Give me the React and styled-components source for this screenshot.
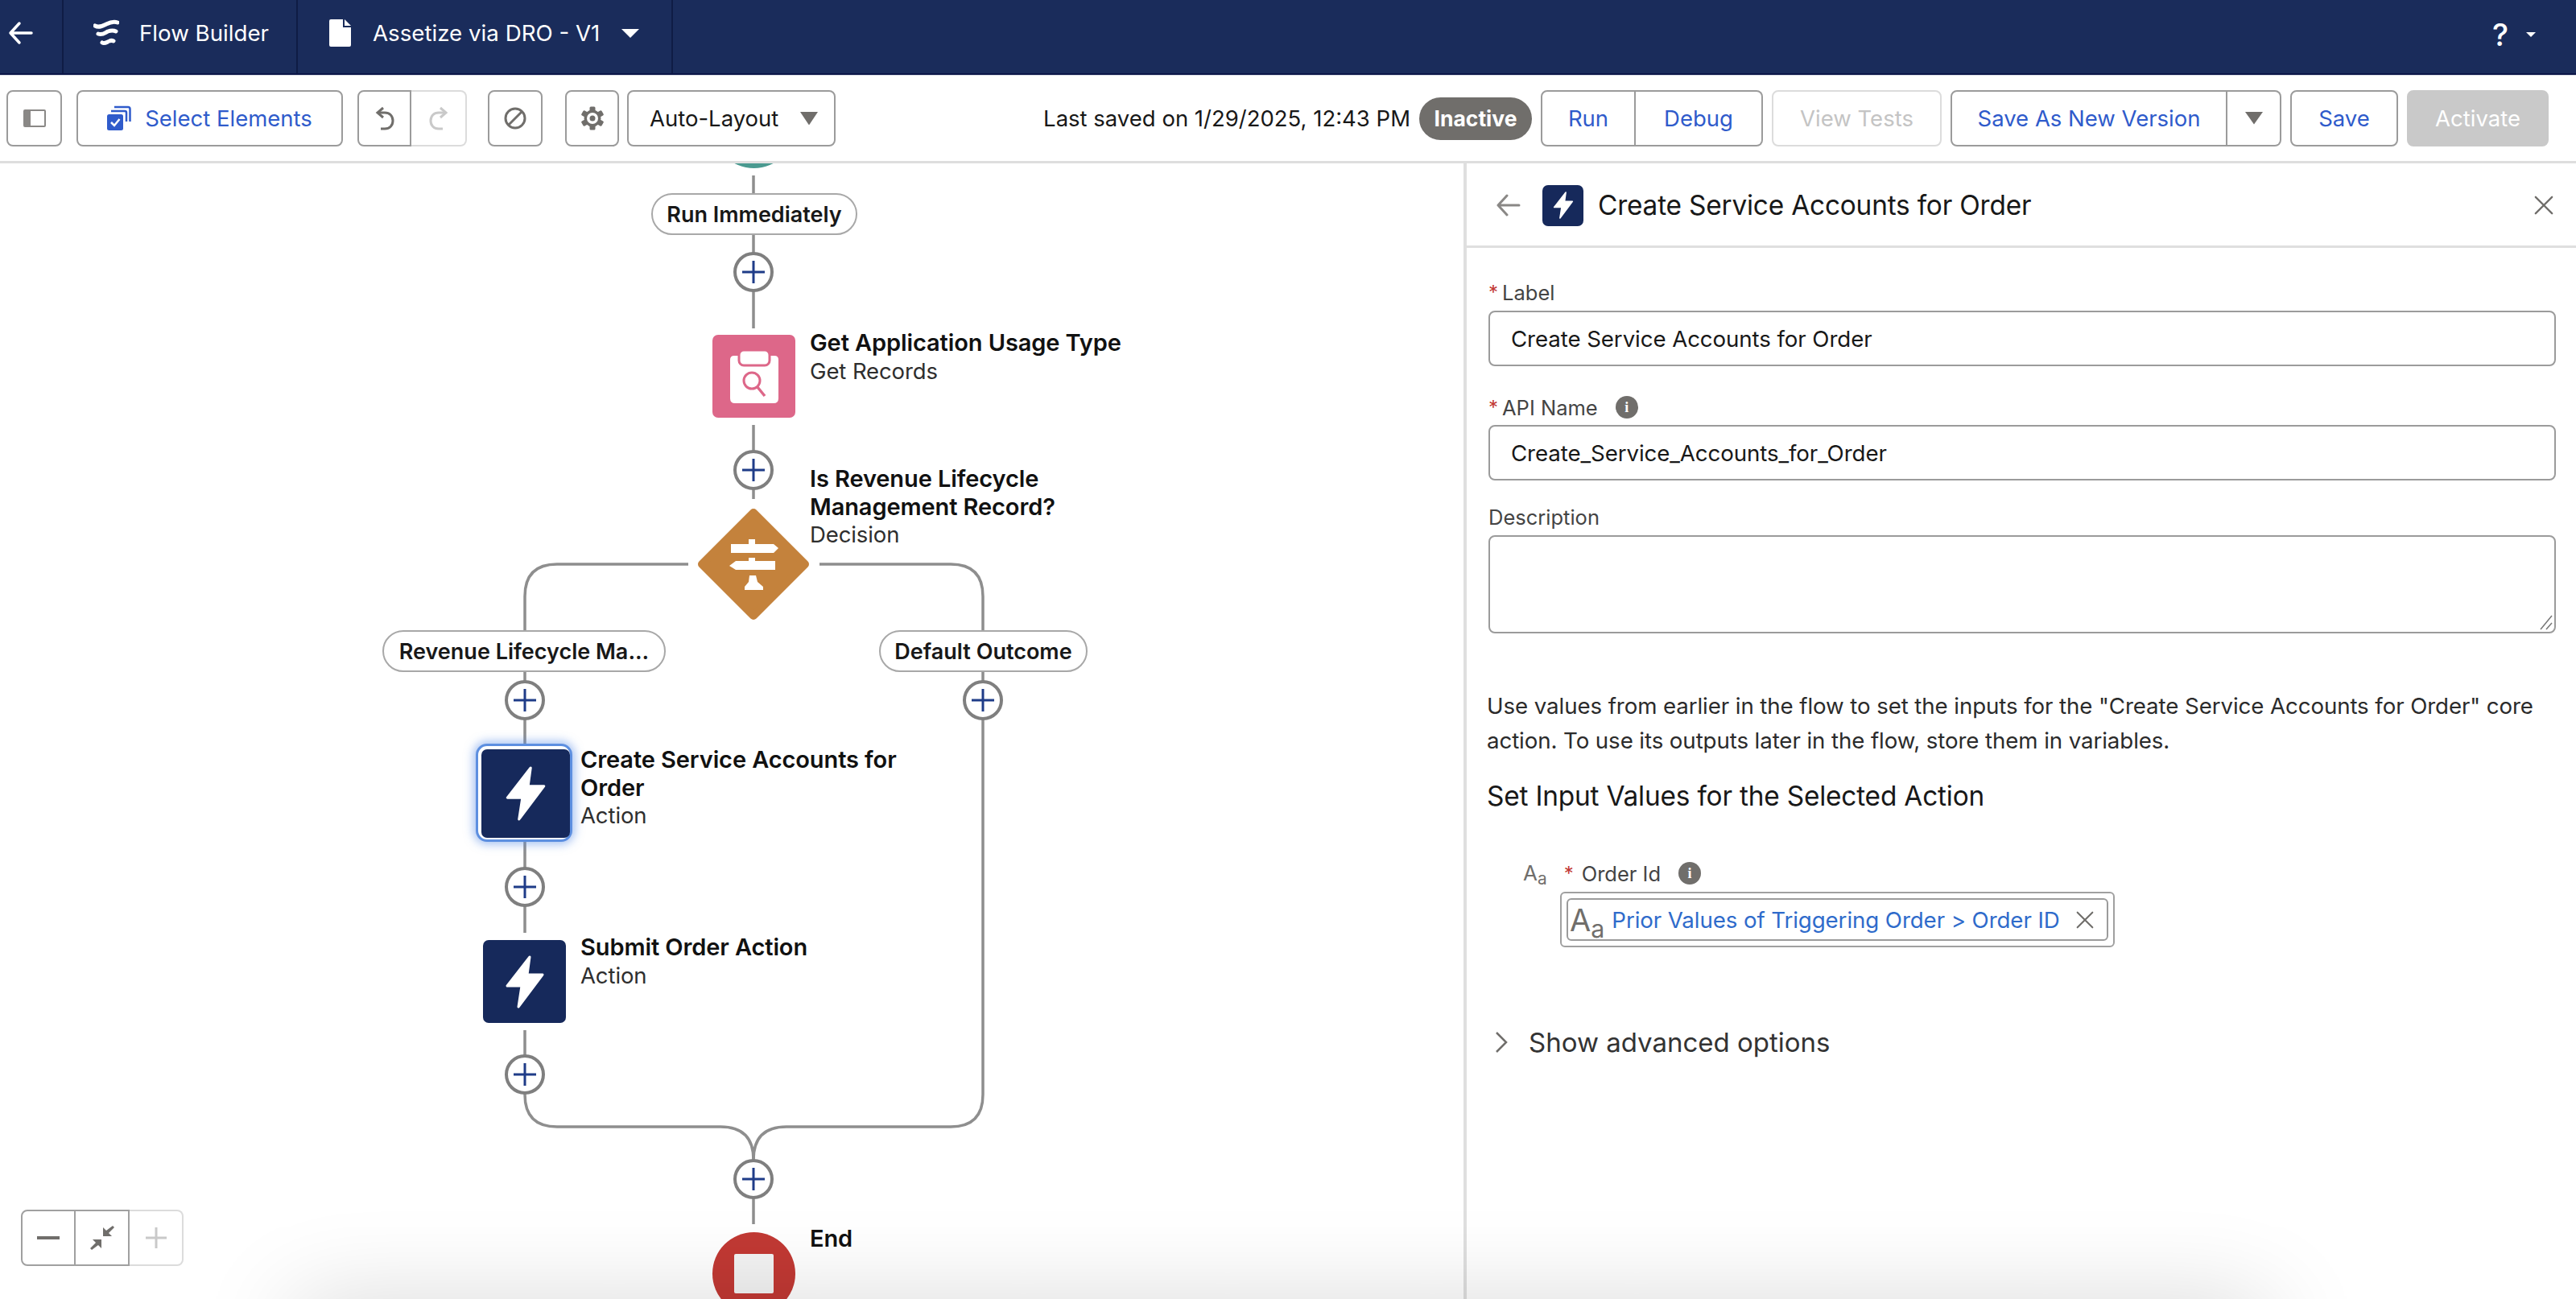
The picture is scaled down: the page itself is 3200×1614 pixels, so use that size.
import React from 'react'
import styled, { createGlobalStyle } from 'styled-components'

const GlobalStyle = createGlobalStyle`
  html, body { margin: 0; padding: 0; background: #fff; }
  body { font-family: Inter, "Liberation Sans", sans-serif; color: #181818; }
`

const Page = styled.div`
  position: relative;
  display: flex;
  flex-direction: column;
  width: 3200px;
  height: 1614px;
  overflow: hidden;
`

/* top bar */
const Header = styled.header`
  display: flex;
  align-items: stretch;
  height: 91px;
  flex: none;
  background: #1a2c5b;
  border-bottom: 2px solid #0c1648;
  color: #fff;
  font-size: 27.7px;
`

const HeaderCell = styled.div`
  display: flex;
  align-items: center;
  width: ${p => p.$w}px;
  padding: 0 0 9px ${p => p.$pad}px;
  gap: ${p => p.$gap || 0}px;
  box-sizing: border-box;
  border-right: 2px solid #0f1c45;
`

const HelpMenu = styled.div`
  margin-left: auto;
  display: flex;
  align-items: center;
  gap: 22px;
  padding: 0 50px 6px 0;
  font-size: 38px;
  font-weight: 500;
`

/* toolbar */
const Toolbar = styled.div`
  display: flex;
  align-items: center;
  flex: none;
  height: 110px;
  padding: 0 34px 0 8px;
  box-sizing: border-box;
  border-top: 1px solid #d8dbe4;
  border-bottom: 3px solid #dedede;
  font-size: 27.5px;
`

const Btn = styled.div`
  display: flex;
  align-items: center;
  justify-content: center;
  box-sizing: border-box;
  width: ${p => p.$w}px;
  height: 70px;
  margin-left: ${p => p.$ml || 0}px;
  border: 2px solid ${p => (p.$off ? '#dcdcdc' : '#9b9b9b')};
  border-radius: 8px;
  background: #fff;
  color: ${p => (p.$off ? '#c4c4c4' : '#2f5bcb')};
  gap: ${p => p.$gap || 0}px;
`

const BtnGroup = styled.div`
  display: flex;
  margin-left: ${p => p.$ml || 0}px;
`

const GroupBtn = styled(Btn)`
  margin: 0;
  &:first-child { border-radius: 8px 0 0 8px; }
  &:last-child { border-radius: 0 8px 8px 0; border-left-width: 0; }
`

const SelectBtn = styled.div`
  display: flex;
  align-items: center;
  justify-content: space-between;
  box-sizing: border-box;
  width: 259px;
  height: 70px;
  margin-left: 10px;
  padding: 0 20px 0 26px;
  border: 2px solid #9b9b9b;
  border-radius: 8px;
  color: #181818;
`

const SavedText = styled.div`
  margin-left: auto;
  color: #181818;
`

const StatusPill = styled.div`
  display: flex;
  align-items: center;
  justify-content: center;
  flex: none;
  width: 140px;
  height: 53px;
  margin-left: 11px;
  border-radius: 27px;
  background: #706e6b;
  color: #fff;
  font-weight: 700;
  font-size: 26.5px;
`

const ActivateBtn = styled(Btn)`
  border-color: #c9c9c9;
  background: #c9c9c9;
  color: #fff;
`

/* main */
const Main = styled.div`
  display: flex;
  flex: 1;
  min-height: 0;
`

const Canvas = styled.div`
  position: relative;
  width: 1818px;
  flex: none;
  overflow: hidden;
`

const Wires = styled.svg`
  position: absolute;
  left: 0;
  top: 0;
`

const Pill = styled.div`
  position: absolute;
  left: ${p => p.$x}px;
  top: ${p => p.$y}px;
  width: ${p => p.$w}px;
  height: 52px;
  box-sizing: border-box;
  display: flex;
  align-items: center;
  justify-content: center;
  border: 2px solid #a8a8a8;
  border-radius: 26px;
  background: #fff;
  font-size: 27px;
  font-weight: 600;
  white-space: nowrap;
`

const AddBtn = styled.div`
  position: absolute;
  left: ${p => p.$x - 25}px;
  top: ${p => p.$y - 25}px;
  width: 50px;
  height: 50px;
  box-sizing: border-box;
  display: flex;
  align-items: center;
  justify-content: center;
  border: 4px solid #7f7f7f;
  border-radius: 50%;
  background: #fff;
`

const NodeIcon = styled.div`
  position: absolute;
  left: ${p => p.$x}px;
  top: ${p => p.$y}px;
  width: ${p => p.$s}px;
  height: ${p => p.$s}px;
  display: flex;
  align-items: center;
  justify-content: center;
  border-radius: ${p => p.$r || 7}px;
  background: ${p => p.$bg || 'none'};
`

const SelectedRing = styled.div`
  position: absolute;
  left: 591px;
  top: 721px;
  width: 120px;
  height: 122px;
  box-sizing: border-box;
  border: 3px solid #5d8fe0;
  border-radius: 14px;
  background: #fff;
  box-shadow: 0 0 12px 3px rgba(90, 140, 230, 0.55);
`

const NodeText = styled.div`
  position: absolute;
  left: ${p => p.$x}px;
  top: ${p => p.$y}px;
  font-size: 27.5px;
  line-height: 34.5px;
  white-space: nowrap;
  color: #2e2e2e;
  letter-spacing: -0.1px;
  b {
    display: block;
    color: #111;
    font-size: 29px;
    font-weight: 600;
  }
`

const ZoomBar = styled.div`
  position: absolute;
  left: 26px;
  top: 1300px;
  display: flex;
  height: 70px;
  box-sizing: border-box;
`

const ZoomCell = styled.div`
  width: ${p => p.$w}px;
  display: flex;
  align-items: center;
  justify-content: center;
  box-sizing: border-box;
  background: #fff;
  border: 2px solid ${p => (p.$off ? '#dcdcdc' : '#a0a0a0')};
  border-left-width: ${p => (p.$first ? 2 : 0)}px;
  border-radius: ${p => p.$r || '0'};
`

/* right panel */
const Panel = styled.aside`
  flex: 1;
  display: flex;
  flex-direction: column;
  border-left: 4px solid #dfdfdf;
  min-width: 0;
`

const PanelHead = styled.div`
  display: flex;
  align-items: center;
  flex: none;
  height: 105px;
  box-sizing: border-box;
  padding: 2px 28px 0 36px;
  border-bottom: 3px solid #dfdfdf;
`

const PanelIcon = styled.div`
  display: flex;
  align-items: center;
  justify-content: center;
  width: 51px;
  height: 51px;
  margin-left: 26px;
  border-radius: 7px;
  background: #16295b;
`

const PanelTitle = styled.div`
  flex: 1;
  margin-left: 18px;
  font-size: 33.4px;
  letter-spacing: -0.2px;
  color: #181818;
`

const PanelBody = styled.div`
  padding: 38px 25px 0 27px;
`

const FieldLabel = styled.div`
  display: flex;
  align-items: center;
  height: 34px;
  margin-top: ${p => p.$mt || 0}px;
  margin-bottom: ${p => p.$mb || 5}px;
  font-size: 25.5px;
  color: #444;
`

const Req = styled.span`
  color: #c23934;
  margin-left: ${p => p.$ml || 0}px;
  margin-right: ${p => p.$mr || 5}px;
  font-size: 24px;
`

const InfoDot = styled.span`
  display: inline-flex;
  align-items: center;
  justify-content: center;
  width: 28px;
  height: 28px;
  margin-left: 22px;
  border-radius: 50%;
  background: #706e6b;
  color: #fff;
  font-size: 18px;
  font-weight: 700;
  font-family: "Liberation Serif", serif;
`

const TextBox = styled.div`
  display: flex;
  align-items: center;
  box-sizing: border-box;
  height: ${p => p.$h || 69}px;
  padding-left: 26px;
  border: 2px solid #9b9b9b;
  border-radius: 8px;
  font-size: 27.7px;
  letter-spacing: -0.1px;
  color: #181818;
  position: relative;
`

const Grip = styled.svg`
  position: absolute;
  right: 1px;
  bottom: 1px;
`

const HelpText = styled.p`
  margin: 69px 0 0 -2px;
  width: 1320px;
  font-size: 27.7px;
  line-height: 43px;
  letter-spacing: -0.1px;
  color: #2b2b2b;
`

const SectionTitle = styled.h3`
  margin: 25px 0 0 -2px;
  font-size: 33.4px;
  line-height: 44px;
  font-weight: 400;
  letter-spacing: -0.2px;
  color: #181818;
`

const InputRow = styled.div`
  display: flex;
  align-items: center;
  height: 34px;
  margin: 57px 0 6px 43px;
  font-size: 25.5px;
  color: #444;
`

const TypeMark = styled.span`
  display: inline-flex;
  align-items: baseline;
  color: #706e6b;
  font-size: ${p => p.$s}px;
  line-height: 1;
  span { font-size: ${p => p.$s * 0.8}px; transform: translateY(${p => p.$s * 0.2}px); }
`

const PillOuter = styled.div`
  box-sizing: border-box;
  width: 689px;
  height: 69px;
  margin-left: 89px;
  padding: 6px;
  border: 2px solid #a0a0a0;
  border-radius: 6px;
`

const PillInner = styled.div`
  display: flex;
  align-items: center;
  height: 100%;
  box-sizing: border-box;
  padding: 0 16px 0 2px;
  border: 2px solid #9b9b9b;
  border-radius: 6px;
`

const PillValue = styled.span`
  flex: 1;
  margin-left: 9px;
  font-size: 27.7px;
  letter-spacing: -0.1px;
  color: #2f6bcb;
  white-space: nowrap;
`

const Advanced = styled.div`
  display: flex;
  align-items: center;
  height: 40px;
  margin: 98px 0 0 8px;
  font-size: 33px;
  color: #333;
  gap: 26px;
`

const BottomShade = styled.div`
  position: absolute;
  left: 397px;
  right: 414px;
  top: 1650px;
  height: 40px;
  background: #000;
  box-shadow: 0 0 120px 30px rgba(0, 0, 0, 0.17);
  pointer-events: none;
`

/* drawings */
const BoltIcon = ({ w, h }) => (
  <svg width={w} height={h} viewBox="0 0 50 66">
    <path
      d="M31 2 L3 38 H21 L17 64 L47 24 H28 Z"
      fill="#fff"
      stroke="#fff"
      strokeWidth="3"
      strokeLinejoin="round"
    />
  </svg>
)

const PlusIcon = () => (
  <svg width="30" height="30" viewBox="0 0 30 30">
    <path d="M15 1V29M1 15H29" stroke="#1f3c88" strokeWidth="3" />
  </svg>
)

const FlowLogo = () => (
  <svg width="32" height="36" viewBox="0 0 32 36" fill="none" stroke="#fff" strokeWidth="5" strokeLinecap="round">
    <path d="M2 9C7 12 12 9 16 7C20 5 25 3 30 5" />
    <path d="M6 19C11 21 14 18 18 16C21 15 24 14 28 16" />
    <path d="M11 30C14 32 17 29 20 28C22 27 23 27 25 28" />
  </svg>
)

const Caret = ({ s = 22, ratio = 0.5, color = '#fff' }) => (
  <svg width={s} height={s * ratio} viewBox="0 0 22 11" preserveAspectRatio="none">
    <path d="M0 0H22L11 11Z" fill={color} />
  </svg>
)

const DocIcon = () => (
  <svg width="27" height="34" viewBox="0 0 27 34">
    <path d="M2 0H17V10H27V32Q27 34 25 34H2Q0 34 0 32V2Q0 0 2 0Z M19 0L27 8H19Z" fill="#fff" />
  </svg>
)

const BackArrow = ({ s = 32, color = '#fff', sw = 3.5 }) => (
  <svg width={s} height={s} viewBox="0 0 32 32" fill="none" stroke={color} strokeWidth={sw} strokeLinecap="round" strokeLinejoin="round">
    <path d="M29 16H3M14 4L3 16L14 28" />
  </svg>
)

const PanelToggle = () => (
  <svg width="28" height="22" viewBox="0 0 28 22">
    <rect x="1" y="1" width="26" height="20" rx="1" fill="none" stroke="#8a8886" strokeWidth="2" />
    <rect x="1" y="1" width="8" height="20" fill="#8a8886" />
  </svg>
)

const StackCheck = () => (
  <svg width="30" height="32" viewBox="0 0 30 32">
    <path d="M9 2H26Q28.5 2 28.5 4.5V20" fill="none" stroke="#2f5bcb" strokeWidth="2.5" />
    <path d="M5 7H22Q24 7 24 9V20" fill="none" stroke="#2f5bcb" strokeWidth="2.5" />
    <rect x="0" y="11" width="20" height="20" rx="2.5" fill="#2f5bcb" />
    <path d="M5 21L9 25L15.5 17" fill="none" stroke="#fff" strokeWidth="2.5" />
  </svg>
)

const UndoIcon = ({ flip, color }) => (
  <svg width="26" height="30" viewBox="0 0 26 30" fill="none" stroke={color} strokeWidth="3" style={flip ? { transform: 'scaleX(-1)' } : undefined}>
    <path d="M11 2L4 8L11 14" />
    <path d="M4 8H13C19 8 23 12 23 18C23 24 19 28 13 28H8" />
  </svg>
)

const BanIcon = () => (
  <svg width="28" height="28" viewBox="0 0 28 28" fill="none" stroke="#706e6b" strokeWidth="3">
    <circle cx="14" cy="14" r="12" />
    <path d="M22 6L6 22" />
  </svg>
)

const GearIcon = () => (
  <svg width="28" height="30" viewBox="-14 -15 28 30">
    {[0, 60, 120].map(a => (
      <rect key={a} x="-3.5" y="-14.5" width="7" height="29" rx="1.5" fill="#706e6b" transform={`rotate(${a})`} />
    ))}
    <circle r="10.5" fill="#706e6b" />
    <circle r="7" fill="#fff" />
    <circle r="3.5" fill="#706e6b" />
  </svg>
)

const ClipboardIcon = () => (
  <svg width="60" height="66" viewBox="0 0 60 66">
    <path d="M5 7H55Q60 7 60 12V60Q60 66 54 66H6Q0 66 0 60V12Q0 7 5 7Z" fill="#fff" />
    <rect x="11" y="0" width="38" height="19" rx="6" fill="#fff" stroke="#dd6789" strokeWidth="3" />
    <circle cx="27" cy="38" r="10" fill="none" stroke="#dd6789" strokeWidth="3" />
    <path d="M34 46L43 57" stroke="#dd6789" strokeWidth="3.5" />
  </svg>
)

const DecisionIcon = () => (
  <svg width="140" height="140" viewBox="0 0 140 140">
    <path d="M70 6L134 70L70 134L6 70Z" fill="#c4823c" stroke="#c4823c" strokeWidth="10" strokeLinejoin="round" />
    <path
      d="M42 45H64V39H72V45H95L101 50L95 56H42Z M48 66H64V62H72V66H97V77H48L40 72Z M65 84H73L75 92L82 98V102H59V98L64 92Z"
      fill="#fff"
    />
  </svg>
)

const EndIcon = styled.div`
  position: absolute;
  left: 885px;
  top: 1328px;
  width: 103px;
  height: 103px;
  display: flex;
  align-items: center;
  justify-content: center;
  border-radius: 50%;
  background: #c23934;
  &::after {
    content: '';
    width: 49px;
    height: 49px;
    background: #f4f4f4;
    border-radius: 2px;
  }
`

const StartStub = styled.div`
  position: absolute;
  left: 885px;
  top: -97px;
  width: 103px;
  height: 103px;
  border-radius: 50%;
  background: #4a9a90;
`

const CloseX = ({ s = 24 }) => (
  <svg width={s} height={s} viewBox="0 0 26 26" fill="none" stroke="#706e6b" strokeWidth="2.5" strokeLinecap="round">
    <path d="M2 2L24 24M24 2L2 24" />
  </svg>
)

const Chevron = () => (
  <svg width="16" height="28" viewBox="0 0 16 28" fill="none" stroke="#706e6b" strokeWidth="2.5">
    <path d="M2 2L14 14L2 26" />
  </svg>
)

const FitIcon = () => (
  <svg width="30" height="30" viewBox="0 0 30 30" fill="#706e6b">
    <path d="M28 0L30 2L23 9L27 13H16V2L20 6Z" />
    <path d="M2 30L0 28L7 21L3 17H14V28L10 24Z" />
  </svg>
)

const wires = [
  'M936 218V408',
  'M936 528V620',
  'M855 701H692Q652 701 652 741V1036',
  'M652 1046V1159',
  'M652 1280V1360Q652 1400 692 1400H895Q936 1400 936 1441V1521',
  'M1018 701H1181Q1221 701 1221 741V1360Q1221 1400 1181 1400H977Q936 1400 936 1441',
]

const addButtons = [
  [936, 135],
  [936, 381],
  [652, 667],
  [1221, 667],
  [652, 899],
  [652, 1132],
  [936, 1262],
]

export default function App() {
  return (
    <Page>
      <GlobalStyle />
      <Header>
        <HeaderCell $w={79} $pad={10}>
          <BackArrow />
        </HeaderCell>
        <HeaderCell $w={291} $pad={37} $gap={25}>
          <FlowLogo />
          Flow Builder
        </HeaderCell>
        <HeaderCell $w={466} $pad={39} $gap={27}>
          <DocIcon />
          Assetize via DRO - V1
          <Caret />
        </HeaderCell>
        <HelpMenu>
          ?
          <Caret s={12} />
        </HelpMenu>
      </Header>

      <Toolbar>
        <Btn $w={69}><PanelToggle /></Btn>
        <Btn $w={331} $ml={18} $gap={17}><StackCheck />Select Elements</Btn>
        <BtnGroup $ml={18}>
          <GroupBtn $w={67}><UndoIcon color="#706e6b" /></GroupBtn>
          <GroupBtn $w={69} $off><UndoIcon flip color="#c9c9c9" /></GroupBtn>
        </BtnGroup>
        <Btn $w={68} $ml={26}><BanIcon /></Btn>
        <Btn $w={67} $ml={28}><GearIcon /></Btn>
        <SelectBtn>Auto-Layout<Caret s={22} ratio={0.75} color="#706e6b" /></SelectBtn>
        <SavedText>Last saved on 1/29/2025, 12:43 PM</SavedText>
        <StatusPill>Inactive</StatusPill>
        <BtnGroup $ml={11}>
          <GroupBtn $w={118}>Run</GroupBtn>
          <GroupBtn $w={158}>Debug</GroupBtn>
        </BtnGroup>
        <Btn $w={211} $ml={11} $off>View Tests</Btn>
        <BtnGroup $ml={11}>
          <GroupBtn $w={344}>Save As New Version</GroupBtn>
          <GroupBtn $w={67}><Caret s={22} ratio={0.7} color="#706e6b" /></GroupBtn>
        </BtnGroup>
        <Btn $w={134} $ml={11}>Save</Btn>
        <ActivateBtn $w={176} $ml={11}>Activate</ActivateBtn>
      </Toolbar>

      <Main>
        <Canvas>
          <StartStub />
          <Wires width="1818" height="1411" viewBox="0 203 1818 1411" fill="none" stroke="#8e8e8e" strokeWidth="3.5">
            {wires.map(d => <path key={d} d={d} />)}
          </Wires>

          <Pill $x={809} $y={37} $w={256}>Run Immediately</Pill>
          <Pill $x={475} $y={580} $w={352}>Revenue Lifecycle Ma...</Pill>
          <Pill $x={1092} $y={580} $w={259}>Default Outcome</Pill>

          {addButtons.map(([x, y]) => (
            <AddBtn key={`${x}-${y}`} $x={x} $y={y}><PlusIcon /></AddBtn>
          ))}

          <NodeIcon $x={885} $y={213} $s={103} $bg="#dd6789"><ClipboardIcon /></NodeIcon>
          <NodeText $x={1006} $y={206}><b>Get Application Usage Type</b>Get Records</NodeText>

          <NodeIcon $x={866} $y={428} $s={140}><DecisionIcon /></NodeIcon>
          <NodeText $x={1006} $y={375}><b>Is Revenue Lifecycle</b><b>Management Record?</b>Decision</NodeText>

          <SelectedRing />
          <NodeIcon $x={598} $y={728} $s={110} $bg="#16295b"><BoltIcon w={52} h={68} /></NodeIcon>
          <NodeText $x={721} $y={724}><b>Create Service Accounts for</b><b>Order</b>Action</NodeText>

          <NodeIcon $x={600} $y={965} $s={103} $bg="#16295b"><BoltIcon w={50} h={66} /></NodeIcon>
          <NodeText $x={721} $y={957}><b>Submit Order Action</b>Action</NodeText>

          <EndIcon />
          <NodeText $x={1006} $y={1319}><b>End</b></NodeText>

          <ZoomBar>
            <ZoomCell $w={68} $first $r="8px 0 0 8px">
              <svg width="28" height="4"><rect width="28" height="4" fill="#706e6b" /></svg>
            </ZoomCell>
            <ZoomCell $w={67}><FitIcon /></ZoomCell>
            <ZoomCell $w={67} $off $r="0 8px 8px 0">
              <svg width="26" height="26"><path d="M13 0V26M0 13H26" stroke="#c9c9c9" strokeWidth="3" /></svg>
            </ZoomCell>
          </ZoomBar>
        </Canvas>

        <Panel>
          <PanelHead>
            <BackArrow s={32} color="#8a8886" sw={3} />
            <PanelIcon><BoltIcon w={26} h={34} /></PanelIcon>
            <PanelTitle>Create Service Accounts for Order</PanelTitle>
            <CloseX />
          </PanelHead>
          <PanelBody>
            <FieldLabel $mb={6}><Req>*</Req>Label</FieldLabel>
            <TextBox>Create Service Accounts for Order</TextBox>
            <FieldLabel $mt={34}><Req>*</Req>API Name<InfoDot>i</InfoDot></FieldLabel>
            <TextBox>Create_Service_Accounts_for_Order</TextBox>
            <FieldLabel $mt={28} $mb={6}>Description</FieldLabel>
            <TextBox $h={122}>
              <Grip width="18" height="22" viewBox="0 0 18 22" fill="none" stroke="#777" strokeWidth="1.5">
                <path d="M2 20L16 3M9 20L16 12" />
              </Grip>
            </TextBox>
            <HelpText>
              Use values from earlier in the flow to set the inputs for the "Create Service Accounts for Order" core action. To use its outputs later in the flow, store them in variables.
            </HelpText>
            <SectionTitle>Set Input Values for the Selected Action</SectionTitle>
            <InputRow>
              <TypeMark $s={26}>A<span>a</span></TypeMark>
              <Req $ml={21} $mr={10}>*</Req>
              Order Id
              <InfoDot>i</InfoDot>
            </InputRow>
            <PillOuter>
              <PillInner>
                <TypeMark $s={38}>A<span>a</span></TypeMark>
                <PillValue>Prior Values of Triggering Order &gt; Order ID</PillValue>
                <CloseX s={22} />
              </PillInner>
            </PillOuter>
            <Advanced><Chevron />Show advanced options</Advanced>
          </PanelBody>
        </Panel>
      </Main>
      <BottomShade />
    </Page>
  )
}
